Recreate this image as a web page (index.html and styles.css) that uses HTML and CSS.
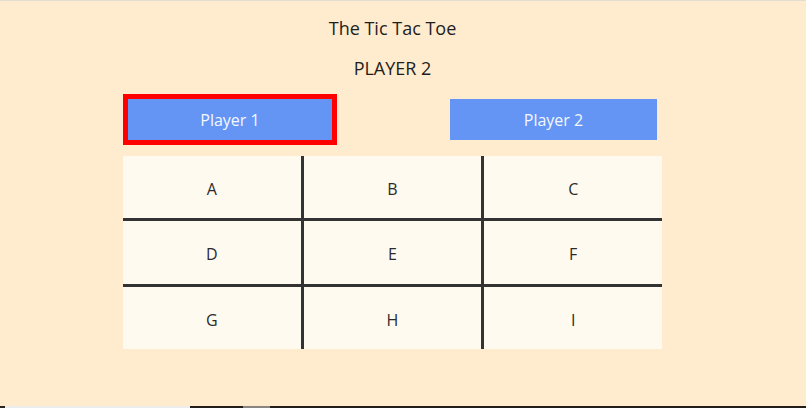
FILE: index.html
```html
<!DOCTYPE html>
<html lang="en">
<head>
<meta charset="utf-8">
<title>The Tic Tac Toe</title>
<link rel="stylesheet" href="styles.css">
</head>
<body>
<main class="page">
  <h1 class="title">The Tic Tac Toe</h1>
  <h2 class="status">PLAYER 2</h2>
  <div class="players">
    <button class="player player-active">Player 1</button>
    <button class="player player-two">Player 2</button>
  </div>
  <div class="board">
    <div class="cell">A</div>
    <div class="cell">B</div>
    <div class="cell">C</div>
    <div class="cell">D</div>
    <div class="cell">E</div>
    <div class="cell">F</div>
    <div class="cell">G</div>
    <div class="cell">H</div>
    <div class="cell">I</div>
  </div>
</main>
<div class="taskbar">
  <span class="tb-edge"></span>
  <span class="tb-light"></span>
  <span class="tb-dark"></span>
  <span class="tb-patch"></span>
  <span class="tb-rest"></span>
</div>
</body>
</html>
```
FILE: styles.css
```css
html, body {
  margin: 0;
  padding: 0;
}
body {
  background: #ffebcd;
  font-family: "Open Sans", "DejaVu Sans", sans-serif;
  color: #1e1e1e;
  min-height: 100vh;
  display: flex;
  flex-direction: column;
  box-sizing: border-box;
  border-top: 1px solid #e2dcd2;
}
.page {
  flex: 1;
  width: 785px;
  display: flex;
  flex-direction: column;
  align-items: center;
}
.title {
  margin: 15px 0 0;
  font-size: 18px;
  font-weight: 400;
  line-height: 24px;
}
.status {
  margin: 16px 0 0;
  font-size: 18px;
  font-weight: 400;
  line-height: 24px;
}
.players {
  width: 539px;
  box-sizing: border-box;
  padding-right: 5px;
  margin-top: 14px;
  display: flex;
  justify-content: space-between;
  align-items: center;
  height: 51px;
}
.player {
  font-family: inherit;
  font-size: 16px;
  color: #f4f7ff;
  background: #6495f5;
  border: none;
  height: 41px;
  padding: 0;
  cursor: pointer;
}
.player-active {
  width: 214px;
  height: 51px;
  border: 5px solid #ff0000;
  box-sizing: border-box;
}
.player-two {
  width: 207px;
}
.board {
  margin-top: 11px;
  width: 539px;
  height: 193px;
  display: grid;
  grid-template-columns: repeat(3, 1fr);
  grid-template-rows: repeat(3, 1fr);
  gap: 3px;
  background: #333333;
}
.cell {
  background: #fffaf0;
  display: flex;
  align-items: center;
  justify-content: center;
  padding-top: 4px;
  font-size: 16px;
  color: #2b2b2b;
}
.taskbar {
  height: 2px;
  display: flex;
}
.taskbar span {
  display: block;
  height: 100%;
}
.tb-edge { width: 5px; background: #2a2420; }
.tb-light { width: 185px; background: #ececec; }
.tb-dark { width: 53px; background: #231d1a; }
.tb-patch { width: 27px; background: #8a8580; }
.tb-rest { flex: 1; background: #231d1a; }
```
